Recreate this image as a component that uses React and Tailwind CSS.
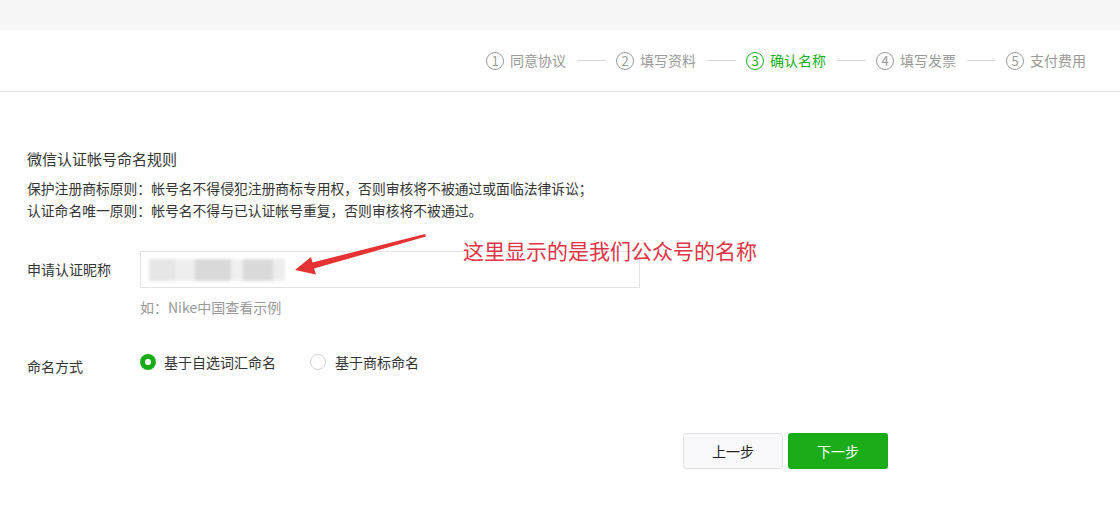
import React from "react";

const steps = [
  { n: 1, label: "同意协议" },
  { n: 2, label: "填写资料" },
  { n: 3, label: "确认名称", active: true },
  { n: 4, label: "填写发票" },
  { n: 5, label: "支付费用" },
];

function Steps() {
  return (
    <div className="flex items-center pr-[34px] justify-end">
      {steps.map((s, i) => (
        <React.Fragment key={s.n}>
          {i > 0 && <div className="w-[29px] h-px bg-[#d9d9d9] ml-[11px] mr-[10px]" />}
          <div
            className={
              "flex items-center gap-[6px] text-[14px] " +
              (s.active ? "text-[#1aad19]" : "text-[#9a9a9a]")
            }
          >
            <span
              className={
                "w-[18px] h-[18px] rounded-full border flex items-center justify-center text-[13px] leading-none " +
                (s.active ? "border-[#1aad19]" : "border-[#9a9a9a]")
              }
            >
              {s.n}
            </span>
            <span>{s.label}</span>
          </div>
        </React.Fragment>
      ))}
    </div>
  );
}

function Arrow() {
  return (
    <svg
      className="absolute left-[152px] top-[-18px]"
      width="140"
      height="50"
      viewBox="0 0 140 50"
    >
      <polygon
        points="3,37 19,24 20.5,29.5 133,1 134,3.5 22,35.5 24,41.5"
        fill="#e63232"
      />
    </svg>
  );
}

export default function App() {
  return (
    <div
      className="w-[1120px] h-[514px] bg-[#fefefe] text-[#333]"
      style={{ fontFamily: '"Noto Sans CJK SC", "Noto Sans", sans-serif' }}
    >
      <div className="h-[30px] bg-[#f7f7f7]" />
      <div className="h-[62px] bg-white border-b border-[#e3e3e3] flex items-center justify-end">
        <Steps />
      </div>

      <div className="pl-[27px] pt-[55px]">
        <div className="text-[15px] leading-[24px] text-[#353535]">微信认证帐号命名规则</div>
        <div className="mt-[6px] text-[13.8px] leading-[22px] text-[#353535]">
          <div>保护注册商标原则：帐号名不得侵犯注册商标专用权，否则审核将不被通过或面临法律诉讼；</div>
          <div>认证命名唯一原则：帐号名不得与已认证帐号重复，否则审核将不被通过。</div>
        </div>

        <div className="flex items-center mt-[30px]">
          <div className="w-[113px] text-[14px] text-[#353535]">申请认证昵称</div>
          <div className="relative">
            <div className="w-[500px] h-[37px] border border-[#e4e4e4] bg-white flex items-center pl-[8px]">
              <div className="flex h-[22px] blur-[1.5px]">
                <div className="w-[26px] bg-[#e6e6e6]" />
                <div className="w-[20px] bg-[#eeeeee]" />
                <div className="w-[36px] bg-[#d9d9d9]" />
                <div className="w-[12px] bg-[#f0f0f0]" />
                <div className="w-[30px] bg-[#dadada]" />
                <div className="w-[12px] bg-[#ededed]" />
              </div>
            </div>
            <Arrow />
            <div className="absolute left-[323px] top-[-16px] text-[21px] leading-[30px] text-[#e03547] whitespace-nowrap">
              这里显示的是我们公众号的名称
            </div>
          </div>
        </div>
        <div className="pl-[113px] mt-[9px] text-[14px] text-[#999]">如：Nike中国查看示例</div>

        <div className="flex items-center mt-[29px]">
          <div className="w-[113px] text-[14px] text-[#353535] pt-[9px]">命名方式</div>
          <div className="flex items-center text-[14px] text-[#353535]">
            <span className="w-[16px] h-[16px] rounded-full bg-[#1aad19] flex items-center justify-center">
              <span className="w-[6px] h-[6px] rounded-full bg-white" />
            </span>
            <span className="ml-[8px]">基于自选词汇命名</span>
            <span className="ml-[34px] w-[16px] h-[16px] rounded-full border border-[#d5d5d5] bg-white" />
            <span className="ml-[9px]">基于商标命名</span>
          </div>
        </div>

        <div className="flex justify-end gap-[5px] mt-[56px] pr-[232px]">
          <button className="w-[100px] h-[36px] border border-[#e2e2e2] bg-[#f9f9fb] rounded-[3px] text-[14px] text-[#222]">
            上一步
          </button>
          <button className="w-[100px] h-[36px] bg-[#1aad19] rounded-[3px] text-[14px] text-white">
            下一步
          </button>
        </div>
      </div>
    </div>
  );
}
